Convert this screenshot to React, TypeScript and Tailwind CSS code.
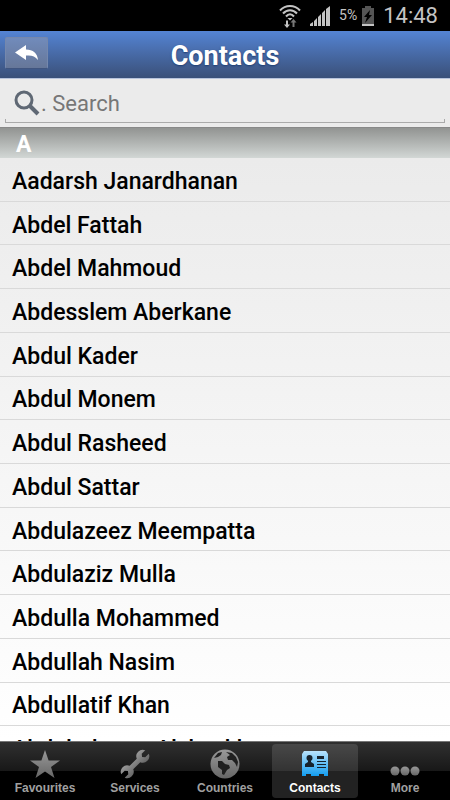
import React, { useState } from "react";

const contacts = [
  "Aadarsh Janardhanan",
  "Abdel Fattah",
  "Abdel Mahmoud",
  "Abdesslem Aberkane",
  "Abdul Kader",
  "Abdul Monem",
  "Abdul Rasheed",
  "Abdul Sattar",
  "Abdulazeez Meempatta",
  "Abdulaziz Mulla",
  "Abdulla Mohammed",
  "Abdullah Nasim",
  "Abdullatif Khan",
  "Abdulrahman Alshaykh",
];

const StatusBar: React.FC = () => (
  <div className="flex h-[31px] shrink-0 items-center justify-end bg-black pr-3 text-[#c4c4c4]">
    <svg width="22" height="24" viewBox="0 0 22 24" fill="none" aria-hidden="true">
      <g stroke="#c4c4c4" strokeWidth="2">
        <path d="M1 6.500c5.500-6 14.500-6 20 0" />
        <path d="M4 9.500c4-4.500 10-4.500 14 0" />
        <path d="M7 12.500c2.500-3 5.500-3 8 0" />
      </g>
      <path d="M8.500 14h5L11 16.500z" fill="#c4c4c4" />
      <path d="M7 16.500v4H5l3 3.500 3-3.500H9v-4z" fill="#c4c4c4" />
      <path d="M13.500 23v-4.500h-2l3-3.500 3 3.500h-2V23z" fill="#777" />
    </svg>
    <svg className="ml-2" width="22" height="22" viewBox="0 0 22 22" fill="#c4c4c4" aria-hidden="true">
      <path d="M1 21v-2l3-2v4zM5 21v-5l3-3v8zM9 21v-9l3-3v12zM13 21V8l3-3v16zM17 21V4l4-3v20z" />
    </svg>
    <span className="ml-2 text-[14px]">5%</span>
    <svg className="ml-1" width="14" height="22" viewBox="0 0 14 22" aria-hidden="true">
      <path d="M4 1h6v2h3v18H1V3h3z" fill="#555" />
      <path d="M1 19h12v2H1z" fill="#c4c4c4" />
      <path d="M9 5l-6 7h3l-2 6 7-8H8z" fill="#000" />
    </svg>
    <span className="ml-2 text-[22px]">14:48</span>
  </div>
);

const Header: React.FC = () => (
  <header className="grid h-12 shrink-0 grid-cols-[1fr_auto_1fr] items-center border-b border-[#b8c4dc] bg-linear-to-b from-[#5484d4] to-[#3a5079] px-[5px]">
    <button
      aria-label="Back"
      className="mb-1 flex h-8 w-[43px] items-center justify-center rounded-xs border border-[#7588ad] border-b-[#40557f] bg-linear-to-b from-[#718bbb] to-[#667799]"
    >
      <svg width="24" height="16" viewBox="0 0 24 16" fill="#fff" aria-hidden="true">
        <path d="M0 7.500L11 0v4.500c7 0 11.500 4 12 10.500-3-4-6.500-5-12-4.500V15z" />
      </svg>
    </button>
    <h1 className="pt-1 text-[27px] font-bold text-white [text-shadow:0_1px_2px_#1d3c70]">Contacts</h1>
  </header>
);

const SearchBox: React.FC = () => {
  const [query, setQuery] = useState("");

  return (
    <div className="h-12 shrink-0 bg-[#ebebeb] px-[5px]">
      <label className="flex h-11 items-center pt-1 pl-2">
        <svg width="28" height="28" viewBox="0 0 28 28" fill="none" stroke="#5f6874" aria-hidden="true">
          <circle cx="11" cy="11" r="8" strokeWidth="3" />
          <path d="M17 17l8 8" strokeWidth="4" />
        </svg>
        <input
          type="text"
          aria-label="Search"
          placeholder=". Search"
          value={query}
          onChange={(e) => setQuery(e.target.value)}
          className="min-w-0 flex-1 bg-transparent pt-px text-[22px] text-black placeholder-[#777] focus:outline-none"
        />
      </label>
      <div className="-mt-1 h-1 border border-t-0 border-[#aaa]" />
    </div>
  );
};

const icons = {
  star: (
    <path d="M16 2l3.600 10.500H31l-9 6.500 3.500 11L16 23.500 6.500 30l3.500-11-9-6.500h11.400z" fill="url(#gray)" />
  ),
  wrench: (
    <path
      transform="translate(16 16) rotate(-45)"
      d="M5-2.500A6.500 6.500 0 0 1 17-2.500H12L10 0l2 2.500h5A6.500 6.500 0 0 1 5 2.500H-5A6.500 6.500 0 0 1-17 2.500h5l2-2.500-2-2.500h-5A6.500 6.500 0 0 1-5-2.500z"
      fill="url(#gray)"
    />
  ),
  globe: (
    <>
      <circle cx="16" cy="16" r="14.500" fill="url(#gray)" />
      <path
        d="M5 10l4-5 4-1-1 3-3 2zM9 13l4 0 3 3 4 1 1 3-3 2-3 5-2-1 0-4-4-3zM17 4l6 1 4 4 2 5-1 5-2-4-3-3-4 0-1-3 3-2z"
        fill="#202020"
      />
    </>
  ),
  card: (
    <>
      <path d="M5 3h22l2 3v22h-4v-2h-5v2h-8v-2H7v2H3V6z" fill="url(#blue)" />
      <circle cx="10.500" cy="10" r="3" fill="#17222c" />
      <path d="M9 12h3v2l3 2v3H6v-3l3-2zM18 8h7v3h-7zM18 13h9v1h-9zM18 16h9v1h-9zM18 19h9v1h-9z" fill="#17222c" />
    </>
  ),
  dots: (
    <g fill="url(#gray)">
      <circle cx="6" cy="23" r="4.500" />
      <circle cx="16" cy="23" r="4.500" />
      <circle cx="26" cy="23" r="4.500" />
    </g>
  ),
};

const tabs = [
  { label: "Favourites", icon: icons.star },
  { label: "Services", icon: icons.wrench },
  { label: "Countries", icon: icons.globe },
  { label: "Contacts", icon: icons.card },
  { label: "More", icon: icons.dots },
];

const TabBar: React.FC = () => {
  const [active, setActive] = useState("Contacts");

  return (
    <nav className="grid h-[59px] shrink-0 grid-cols-5 border-t border-[#777] bg-[linear-gradient(#303030,#181818_50%,#000_50%)] font-['Liberation_Sans',sans-serif]">
      {/* gradients shared by every tab icon */}
      <svg className="absolute" width="0" height="0" aria-hidden="true">
        <defs>
          <linearGradient id="gray" x1="0" y1="0" x2="0" y2="1">
            <stop stopColor="#999" />
            <stop offset="1" stopColor="#666" />
          </linearGradient>
          <linearGradient id="blue" x1="0" y1="0" x2="0" y2="1">
            <stop stopColor="#b9e2fb" />
            <stop offset="1" stopColor="#129df0" />
          </linearGradient>
        </defs>
      </svg>
      {tabs.map((tab) => (
        <button
          key={tab.label}
          onClick={() => setActive(tab.label)}
          className={`m-[2px] flex flex-col items-center rounded-sm pt-1 text-[12px] leading-4 font-bold ${
            active === tab.label
              ? "bg-[linear-gradient(#484848,#333_50%,#222_50%)] text-white"
              : "text-[#a0a0a0]"
          }`}
        >
          <svg width="32" height="32" viewBox="0 0 32 32" aria-hidden="true">
            {tab.icon}
          </svg>
          {tab.label}
        </button>
      ))}
    </nav>
  );
};

const App: React.FC = () => (
  <div className="flex h-screen flex-col overflow-hidden bg-[#ebebeb] font-[Roboto,sans-serif]">
    <StatusBar />
    <Header />
    <SearchBox />
    <h2 className="h-[31px] shrink-0 border-t border-[#888] bg-linear-to-b from-[#929492] to-[#d2d7d5] pt-px pl-4 text-[23px] leading-8 font-bold text-white">
      A
    </h2>
    <ul className="grid min-h-0 flex-1 auto-rows-[7.5%] overflow-y-auto bg-linear-to-b from-[#ebebeb] to-white [scrollbar-width:none]">
      {contacts.map((name) => (
        <li
          key={name}
          className="flex items-center border-b border-[#d9d9d9] px-3 pt-[5px] text-[23px] leading-7 font-medium text-black"
        >
          {name}
        </li>
      ))}
    </ul>
    <TabBar />
  </div>
);

export default App;
